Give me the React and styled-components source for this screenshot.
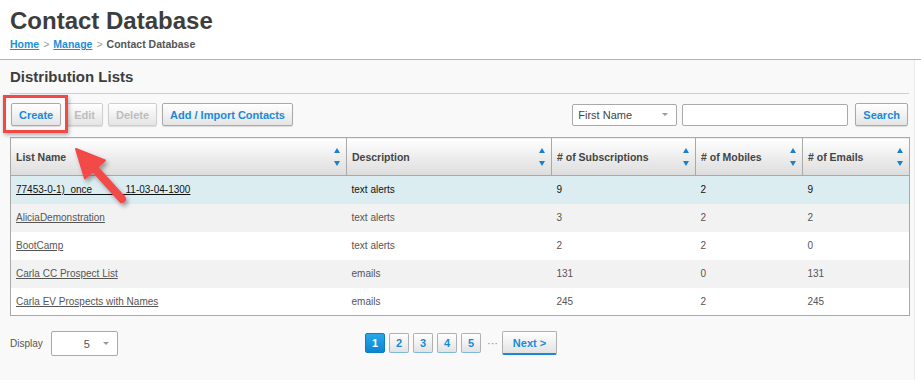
import React from "react";
import styled, { createGlobalStyle } from "styled-components";

const Global = createGlobalStyle`
  html, body { margin: 0; padding: 0; background: #ffffff; }
  body { font-family: "Liberation Sans", Arial, sans-serif; color: #444; }
  * { box-sizing: border-box; }
`;

const Page = styled.div`
  position: relative;
  width: 921px;
  height: 380px;
  overflow: hidden;
`;

const Header = styled.header`
  background: #fff;
  padding: 7px 10px 8px 10px;
  border-bottom: 1px solid #b4b4b4;
`;

const Title = styled.h1`
  margin: 0;
  font-size: 24px;
  line-height: 28px;
  font-weight: bold;
  color: #3d3d3d;
`;

const Crumbs = styled.nav`
  margin-top: 2px;
  font-size: 10.5px;
  line-height: 14px;
  font-weight: bold;
  color: #555;
  display: flex;
  gap: 4px;
  align-items: center;
`;

const CrumbLink = styled.a`
  color: #1a8fd8;
  text-decoration: underline;
`;

const Sep = styled.span`
  color: #999;
  font-weight: normal;
`;

const Main = styled.main`
  width: 915px;
  background: #f9f9f9;
  padding: 0 5px 30px 10px;
  border-right: 1px solid #ececec;
`;

const SectionTitle = styled.h2`
  margin: 0;
  padding: 8px 0 7px 0;
  font-size: 15px;
  line-height: 18px;
  font-weight: bold;
  color: #3d3d3d;
  border-bottom: 1px solid #cfcfcf;
`;

const Toolbar = styled.div`
  margin-top: 9px;
  display: flex;
  justify-content: space-between;
  align-items: center;
  padding-left: 1px;
  padding-right: 1px;
`;

const Group = styled.div`
  display: flex;
  align-items: center;
  gap: ${(p) => p.$gap || 5}px;
`;

const Button = styled.button`
  height: 23px;
  padding: 0 7px;
  font-family: inherit;
  font-size: 11px;
  font-weight: bold;
  color: ${(p) => (p.disabled ? "#bdbdbd" : "#1a8ad6")};
  background: linear-gradient(#ffffff, #e4e4e4);
  border: 1px solid ${(p) => (p.disabled ? "#cfcfcf" : "#a9a9a9")};
  border-radius: 2px;
  box-shadow: 0 1px 1px rgba(0, 0, 0, 0.12);
  cursor: pointer;
`;

const HighlightWrap = styled.span`
  position: relative;
  display: inline-flex;
`;

const Highlight = styled.span`
  position: absolute;
  left: -8px;
  right: -7px;
  top: -8px;
  bottom: -7px;
  border: 3px solid #f24848;
  box-shadow: 1px 2px 4px rgba(0, 0, 0, 0.3);
  pointer-events: none;
`;

const Select = styled.div`
  width: ${(p) => p.$w}px;
  height: ${(p) => p.$h || 22}px;
  background: #fff;
  border: 1px solid #a9a9a9;
  border-radius: 2px;
  display: flex;
  align-items: center;
  justify-content: space-between;
  padding: 0 8px 0 ${(p) => p.$pl || 5}px;
  font-size: 11px;
  color: ${(p) => p.$color || "#444"};
`;

const Caret = styled.span`
  width: 0;
  height: 0;
  border-left: 3px solid transparent;
  border-right: 3px solid transparent;
  border-top: 3px solid #999;
`;

const Input = styled.input`
  width: 166px;
  height: 22px;
  margin: 0 2px 0 0;
  border: 1px solid #a9a9a9;
  border-radius: 2px;
  background: #fff;
`;

const Table = styled.table`
  margin-top: 11px;
  width: 899px;
  border-collapse: collapse;
  table-layout: fixed;
  border: 1px solid #a9a9a9;
  font-size: 10px;
`;

const Th = styled.th`
  height: 38px;
  padding: 0 6px 0 5px;
  text-align: left;
  font-size: 10.5px;
  font-weight: bold;
  color: #444;
  background: linear-gradient(#ffffff, #dcdcdc);
  border: 1px solid #a9a9a9;
`;

const ThInner = styled.div`
  display: flex;
  align-items: center;
  justify-content: space-between;
`;

const SortArrows = styled.span`
  display: flex;
  flex-direction: column;
  gap: 8px;
`;

const Tri = styled.span`
  width: 0;
  height: 0;
  border-left: 3.5px solid transparent;
  border-right: 3.5px solid transparent;
  ${(p) =>
    p.$up
      ? "border-bottom: 5px solid #1a7fcc;"
      : "border-top: 5px solid #1a7fcc;"}
`;

const Tr = styled.tr`
  background: ${(p) => (p.$active ? "#dcedf2" : p.$odd ? "#f2f2f2" : "#ffffff")};
  color: ${(p) => (p.$active ? "#111" : "#555")};
`;

const Td = styled.td`
  height: 28px;
  padding: 0 5px;
  font-size: 10px;
`;

const NameLink = styled.a`
  color: inherit;
  text-decoration: underline;
`;

const Footer = styled.div`
  margin-top: 14px;
  display: grid;
  grid-template-columns: 1fr auto 1fr;
  align-items: center;
`;

const Display = styled.div`
  display: flex;
  align-items: center;
  gap: 8px;
  font-size: 10px;
  line-height: 14px;
  padding-top: 1px;
  color: #555;
`;

const Pager = styled.div`
  display: flex;
  align-items: center;
  gap: 4px;
  padding-left: 3px;
`;

const PageBtn = styled.span`
  width: 20px;
  height: 20px;
  display: flex;
  align-items: center;
  justify-content: center;
  font-size: 11px;
  font-weight: bold;
  border-radius: 2px;
  color: ${(p) => (p.$active ? "#fff" : "#1a8ad6")};
  background: ${(p) =>
    p.$active ? "linear-gradient(#2aa6ea, #0a86d0)" : "linear-gradient(#ffffff, #e2e2e2)"};
  border: 1px solid ${(p) => (p.$active ? "#0b7fc4" : "#b0b0b0")};
  border-bottom-color: ${(p) => (p.$active ? "#0b7fc4" : "#7fb6dc")};
`;

const Dots = styled.span`
  margin: 0 0 0 2px;
  font-size: 11px;
  color: #888;
`;

const NextBtn = styled(PageBtn)`
  width: 55px;
  height: 24px;
  border-bottom: 2px solid #1a8ad6;
`;

const Overlay = styled.svg`
  position: absolute;
  left: 0;
  top: 0;
  pointer-events: none;
`;

const columns = [
  { label: "List Name", w: 336 },
  { label: "Description", w: 205 },
  { label: "# of Subscriptions", w: 144 },
  { label: "# of Mobiles", w: 107 },
  { label: "# of Emails", w: 107 },
];

const rows = [
  ["77453-0-1)_once______11-03-04-1300", "text alerts", "9", "2", "9"],
  ["AliciaDemonstration", "text alerts", "3", "2", "2"],
  ["BootCamp", "text alerts", "2", "2", "0"],
  ["Carla CC Prospect List", "emails", "131", "0", "131"],
  ["Carla EV Prospects with Names", "emails", "245", "2", "245"],
];

function Arrow() {
  // tip (76,149), tail (122,199)
  return (
    <Overlay width="921" height="380" viewBox="0 0 921 380">
      <defs>
        <filter id="sh" x="-30%" y="-30%" width="160%" height="160%">
          <feDropShadow dx="2" dy="3" stdDeviation="2" floodColor="#000" floodOpacity="0.35" />
        </filter>
      </defs>
      <g filter="url(#sh)" fill="#f24848" stroke="#f24848">
        <line x1="94" y1="168" x2="122" y2="199" strokeWidth="8" strokeLinecap="round" />
        <polygon points="76,149 85,178.5 105,160.5" strokeWidth="2" strokeLinejoin="round" />
      </g>
    </Overlay>
  );
}

export default function App() {
  return (
    <Page>
      <Global />
      <Header>
        <Title>Contact Database</Title>
        <Crumbs>
          <CrumbLink>Home</CrumbLink>
          <Sep>&gt;</Sep>
          <CrumbLink>Manage</CrumbLink>
          <Sep>&gt;</Sep>
          <span>Contact Database</span>
        </Crumbs>
      </Header>
      <Main>
        <SectionTitle>Distribution Lists</SectionTitle>
        <Toolbar>
          <Group>
            <HighlightWrap>
              <Button>Create</Button>
              <Highlight />
            </HighlightWrap>
            <Button disabled>Edit</Button>
            <Button disabled>Delete</Button>
            <Button>Add / Import Contacts</Button>
          </Group>
          <Group $gap={5}>
            <Select $w={105}>
              <span>First Name</span>
              <Caret />
            </Select>
            <Input />
            <Button>Search</Button>
          </Group>
        </Toolbar>
        <Table>
          <colgroup>
            {columns.map((c) => (
              <col key={c.label} style={{ width: c.w }} />
            ))}
          </colgroup>
          <thead>
            <tr>
              {columns.map((c) => (
                <Th key={c.label}>
                  <ThInner>
                    <span>{c.label}</span>
                    <SortArrows>
                      <Tri $up />
                      <Tri />
                    </SortArrows>
                  </ThInner>
                </Th>
              ))}
            </tr>
          </thead>
          <tbody>
            {rows.map((r, i) => (
              <Tr key={i} $active={i === 0} $odd={i % 2 === 1}>
                <Td>
                  <NameLink>{r[0]}</NameLink>
                </Td>
                <Td>{r[1]}</Td>
                <Td>{r[2]}</Td>
                <Td>{r[3]}</Td>
                <Td>{r[4]}</Td>
              </Tr>
            ))}
          </tbody>
        </Table>
        <Footer>
          <Display>
            <span>Display</span>
            <Select $w={67} $h={25} $pl={32} $color="#555">
              <span>5</span>
              <Caret />
            </Select>
          </Display>
          <Pager>
            <PageBtn $active>1</PageBtn>
            <PageBtn>2</PageBtn>
            <PageBtn>3</PageBtn>
            <PageBtn>4</PageBtn>
            <PageBtn>5</PageBtn>
            <Dots>···</Dots>
            <NextBtn>Next &gt;</NextBtn>
          </Pager>
          <span />
        </Footer>
      </Main>
      <Arrow />
    </Page>
  );
}
